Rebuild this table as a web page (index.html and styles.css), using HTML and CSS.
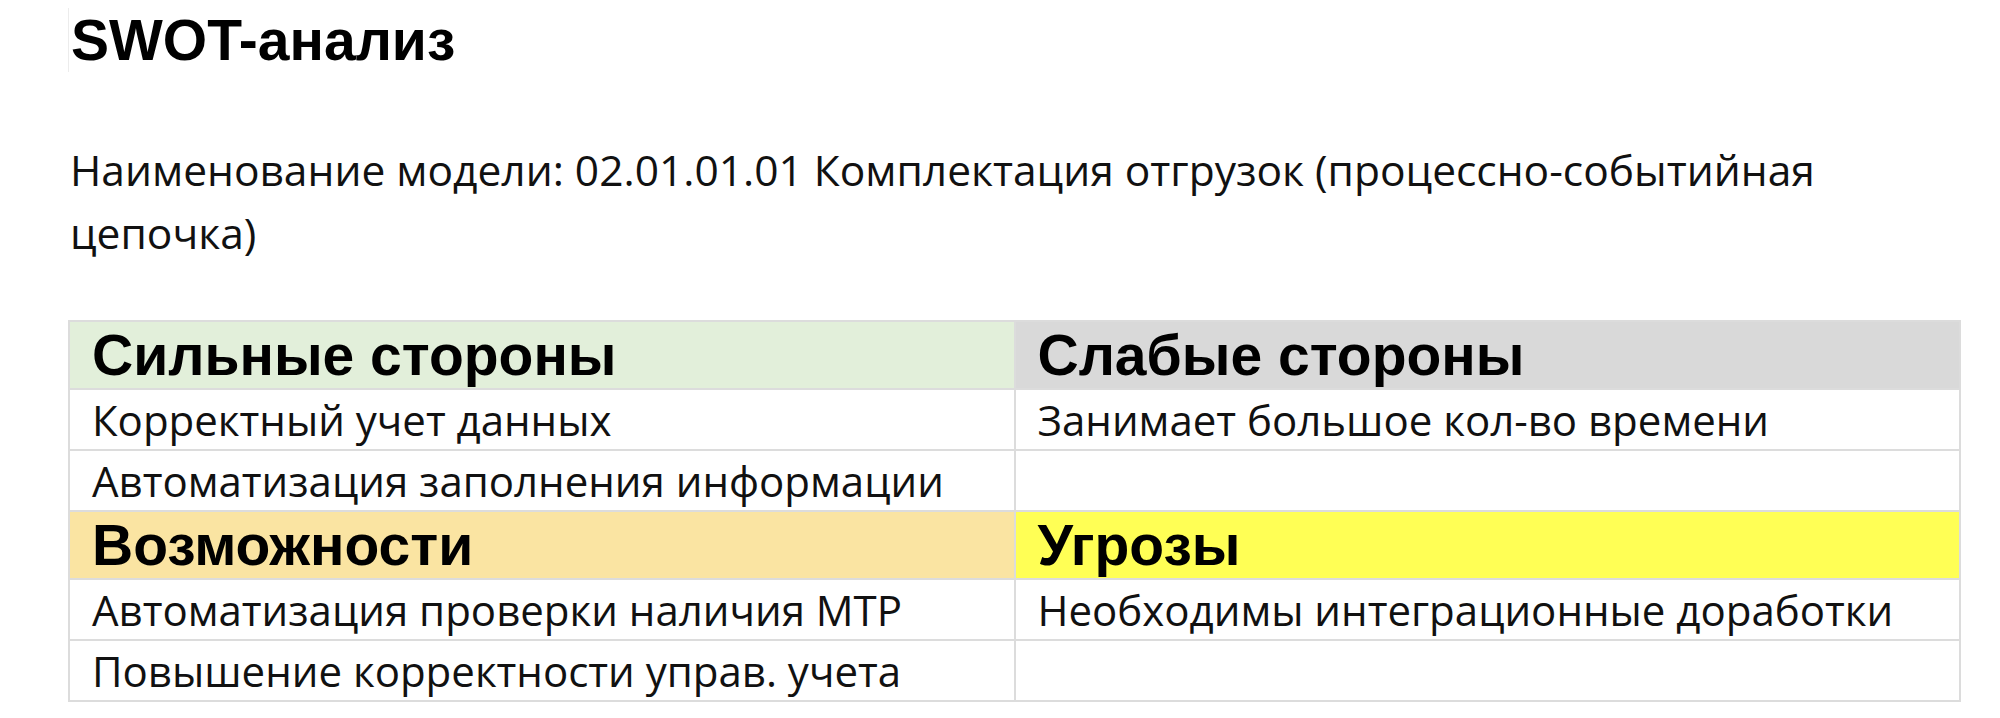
FILE: index.html
```html
<!DOCTYPE html>
<html lang="ru">
<head>
<meta charset="utf-8">
<title>SWOT-анализ</title>
<link rel="stylesheet" href="styles.css">
</head>
<body>
<main class="page">
  <h1 class="title">SWOT-анализ</h1>
  <p class="model">Наименование модели: 02.01.01.01 Комплектация отгрузок (процессно-событийная цепочка)</p>
  <table class="swot">
    <colgroup><col class="col"><col class="col"></colgroup>
    <tbody>
      <tr class="head-row">
        <th class="head strengths">Сильные стороны</th>
        <th class="head weaknesses">Слабые стороны</th>
      </tr>
      <tr class="item-row">
        <td class="item">Корректный учет данных</td>
        <td class="item">Занимает большое кол-во времени</td>
      </tr>
      <tr class="item-row">
        <td class="item">Автоматизация заполнения информации</td>
        <td class="item"></td>
      </tr>
      <tr class="head-row">
        <th class="head opportunities">Возможности</th>
        <th class="head threats">Угрозы</th>
      </tr>
      <tr class="item-row">
        <td class="item">Автоматизация проверки наличия МТР</td>
        <td class="item">Необходимы интеграционные доработки</td>
      </tr>
      <tr class="item-row">
        <td class="item">Повышение корректности управ. учета</td>
        <td class="item"></td>
      </tr>
    </tbody>
  </table>
</main>
</body>
</html>
```

FILE: styles.css
```css
html, body {
  margin: 0;
  padding: 0;
  background: #ffffff;
}

body {
  color: #000000;
  font-family: "Open Sans", "Noto Sans", sans-serif;
}

.page {
  width: 1893px;
  padding: 8px 0 0 68px;
}

.title {
  margin: 0;
  padding-left: 2px;
  border-left: 1px solid #ececec;
  font-family: "Liberation Sans", Arial, sans-serif;
  font-weight: 700;
  font-size: 57px;
  line-height: 64px;
}

.model {
  margin: 66px 0 0 2px;
  font-size: 42.5px;
  line-height: 63px;
  color: #111111;
}

.swot {
  margin-top: 56px;
  width: 1893px;
  border-collapse: collapse;
  table-layout: fixed;
}

.col {
  width: 50%;
}

.head,
.item {
  border: 2px solid #dcdcdc;
  text-align: left;
  vertical-align: middle;
  padding: 0 0 0 22px;
}

.head {
  height: 66px;
  font-family: "Liberation Sans", Arial, sans-serif;
  font-weight: 700;
  font-size: 57px;
  line-height: 60px;
}

.item {
  height: 59px;
  font-size: 42px;
  line-height: 56px;
  color: #111111;
}

.strengths { background: #e2efda; }
.weaknesses { background: #d9d9d9; }
.opportunities { background: #fae4a2; }
.threats { background: #ffff55; }
```
